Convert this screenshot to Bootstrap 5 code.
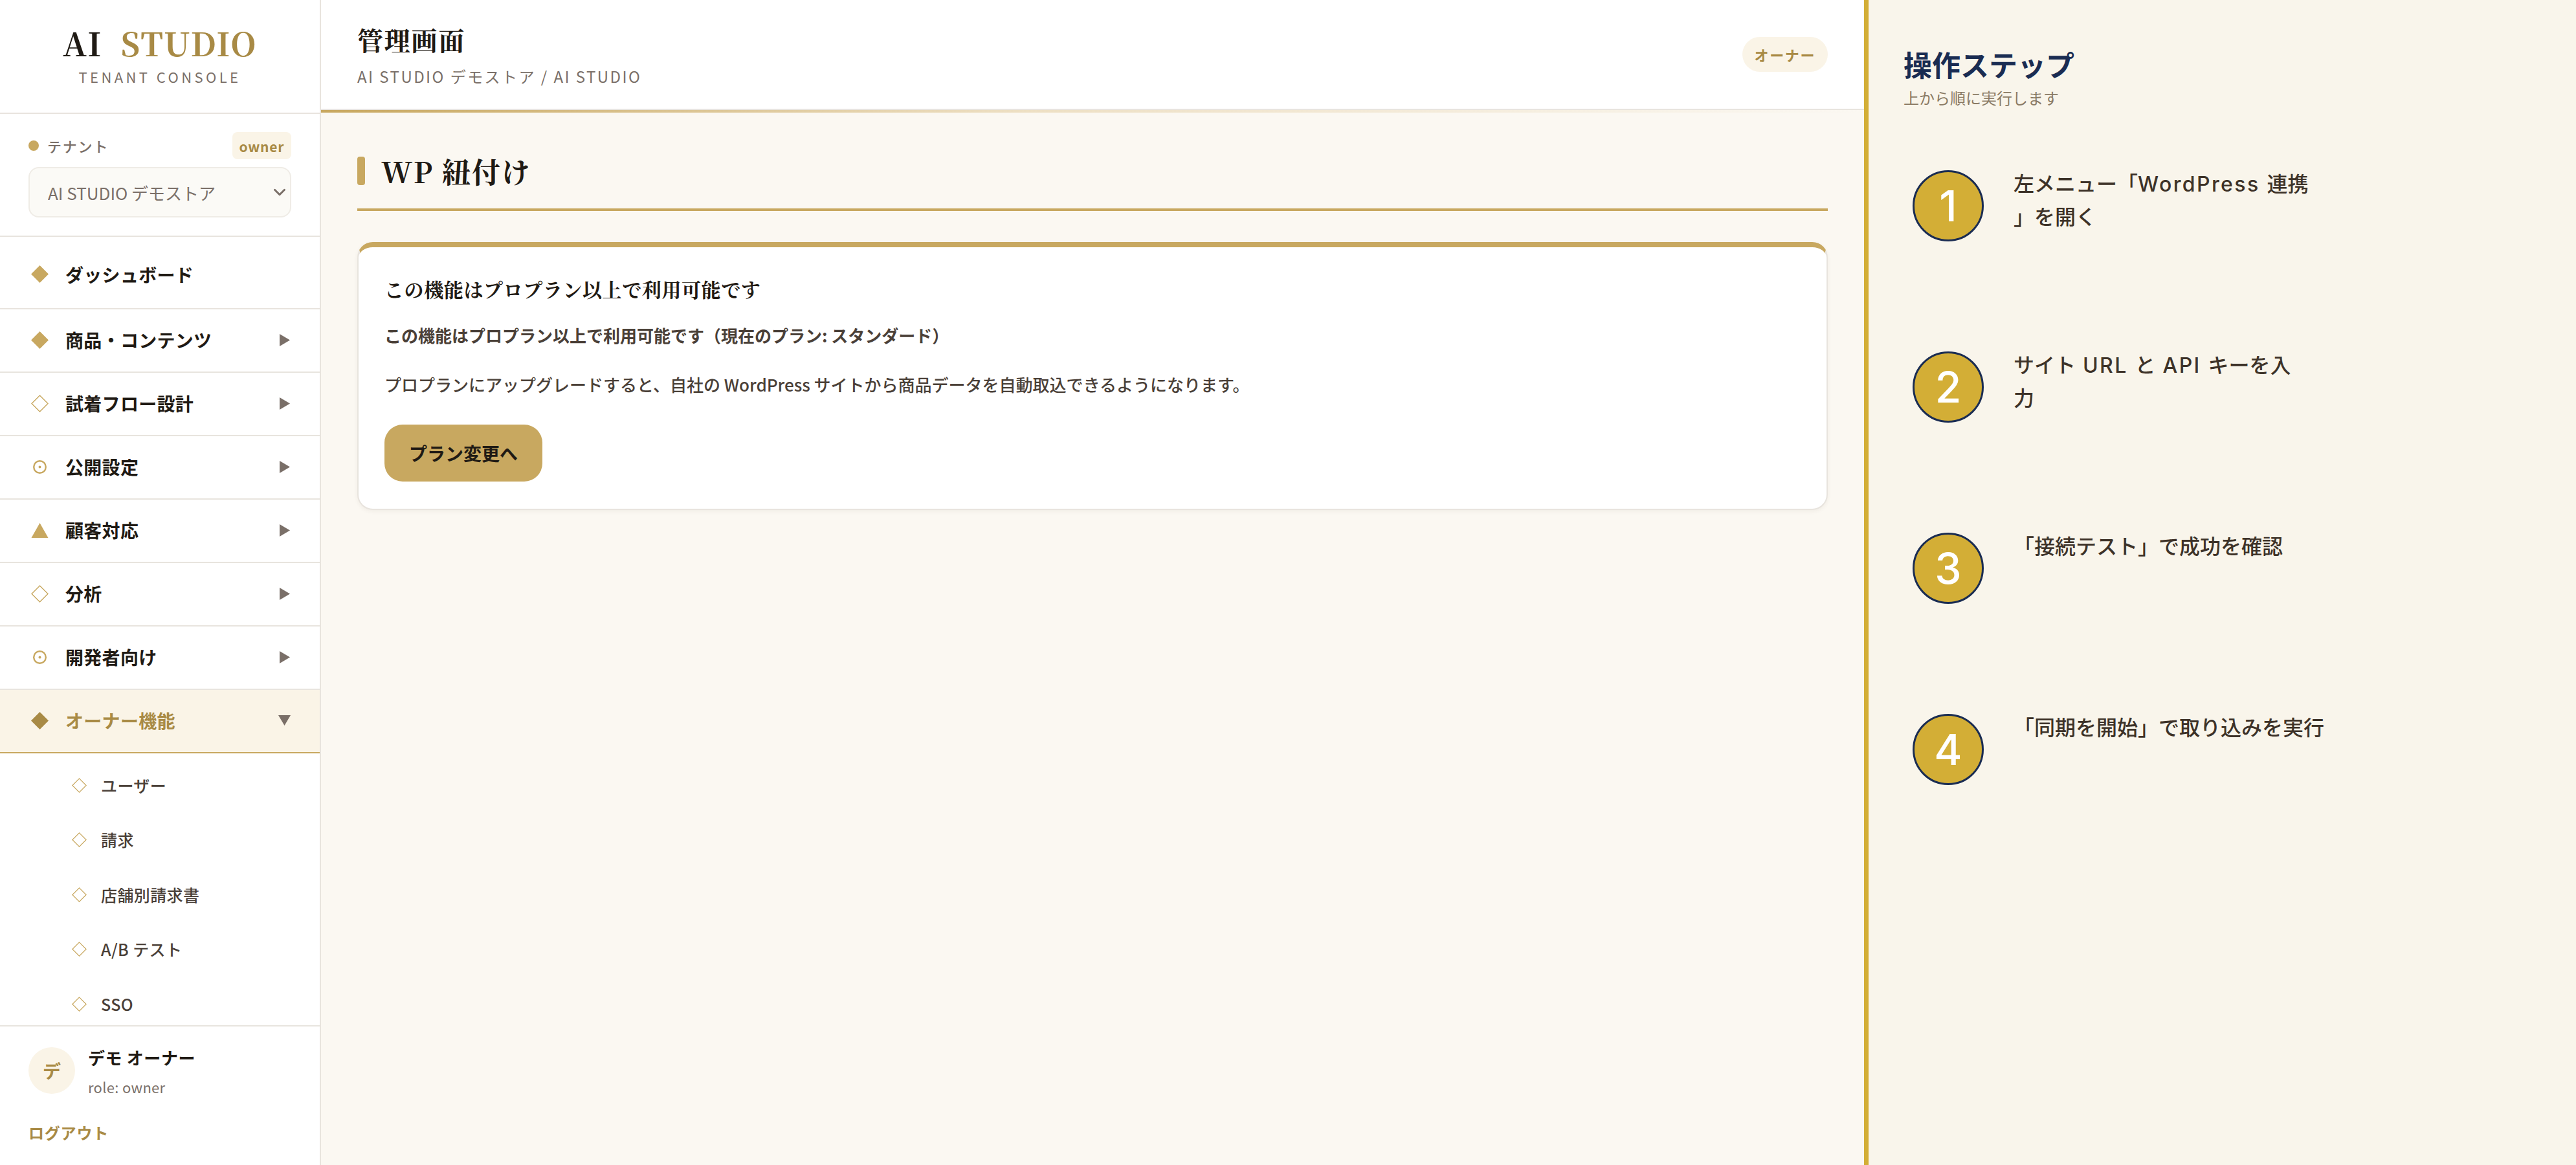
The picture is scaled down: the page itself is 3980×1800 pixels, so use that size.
<!DOCTYPE html>
<html lang="ja">
<head>
<meta charset="utf-8">
<title>管理画面</title>
<link href="https://cdn.jsdelivr.net/npm/bootstrap@5.3.0/dist/css/bootstrap.min.css" rel="stylesheet">
<style>
:root{--gold:#c8a860;--gold-dk:#a88a45;--cream:#faf4e7;--ink:#1f1a14;--mut:#7a6f68;--line:#e8e4de;--serif:"Noto Serif CJK JP","Liberation Serif","Noto Sans CJK JP",serif;--sans:"Noto Sans CJK JP","Noto Sans",sans-serif}
html,body{height:100%}
body{font-family:var(--sans);background:#fbf8f2;color:var(--ink);overflow:hidden;width:3980px;height:1800px}
.sb{width:496px;height:1800px;background:#fff;border-right:2px solid var(--line);flex:none}
.sb-brand{height:176px;border-bottom:2px solid var(--line);text-align:center;padding-top:32px}
.brand-big{font-family:var(--serif);font-weight:700;font-size:50px;line-height:66px;letter-spacing:1.6px;white-space:pre}
.brand-big span{color:var(--gold-dk)}
.brand-sub{font-size:22px;line-height:30px;letter-spacing:4.4px;color:var(--mut);margin-top:5px}
.sb-tenant{height:190px;border-bottom:2px solid var(--line);padding:28px 44px 0}
.tn-dot{width:16px;height:16px;border-radius:50%;background:var(--gold);margin-right:13px}
.tn-lbl{font-size:22px;font-weight:500;letter-spacing:1.8px;color:var(--mut);line-height:38px}
.tn-owner{background:var(--cream);color:var(--gold-dk);font-size:21px;font-weight:700;letter-spacing:.7px;border-radius:8px;padding:0 11px;height:42px;line-height:44px}
.tn-sel{margin-top:12px;height:78px;border:2px solid #efece6;border-radius:16px;background-color:#fbfaf6;font-size:26px;color:var(--mut);padding:0 40px 0 28px;
 background-image:url("data:image/svg+xml,%3csvg xmlns='http://www.w3.org/2000/svg' viewBox='0 0 16 16'%3e%3cpath fill='none' stroke='%237a6f68' stroke-linecap='round' stroke-linejoin='round' stroke-width='2.4' d='m2 5 6 6 6-6'/%3e%3c/svg%3e");background-size:20px 20px;background-position:right 6px center}
.sb-nav{flex:1 1 0;min-height:0;overflow:hidden;padding-top:9px}
.nv{height:98px;border-bottom:2px solid var(--line);display:flex;align-items:center;padding:0 46px 2px 48px;font-size:28px;font-weight:700;letter-spacing:.3px;color:var(--ink);text-decoration:none}
.nv-first{height:103px;padding-bottom:4px}
.nv-ico{width:27px;height:27px;flex:none;margin-right:26px;display:block}
.nv-txt{flex:1 1 auto}
.nv-arr{width:16px;height:19px;flex:none;display:block}
.nv-on{background:var(--cream);color:var(--gold-dk);border-bottom-color:var(--gold)}
.nv-on .nv-arr{width:19px;height:16px;margin-right:-1px}
.sub-list{padding-top:7px}
.sb-sub{height:84.5px;display:flex;align-items:center;padding-left:111px;font-size:25px;font-weight:500;letter-spacing:.4px;color:#4a4038;text-decoration:none}
.sb-sub svg{width:23px;height:23px;margin-right:22px;flex:none}
.sb-foot{height:216px;border-top:2px solid var(--line);padding:32px 44px 0;flex:none}
.av{width:72px;height:72px;border-radius:50%;background:var(--cream);color:var(--gold-dk);font-weight:700;font-size:28px;margin-right:20px;flex:none}
.who-n{font-size:26px;font-weight:700;line-height:36px;margin-top:-2px;letter-spacing:.6px}
.who-r{font-size:22px;line-height:30px;color:var(--mut);margin-top:12px;letter-spacing:.3px}
.logout{display:block;margin-top:38px;font-size:24px;font-weight:700;line-height:36px;color:var(--gold-dk);text-decoration:none;letter-spacing:.8px}
.mn{width:2384px;flex:none;height:1800px}
.mn-head{height:170px;background:#fff;border-bottom:2px solid var(--line);padding:0 56px;position:relative}
.mn-head::after{content:"";position:absolute;left:0;right:0;bottom:-6px;height:4px;background:linear-gradient(90deg,#c8a860 0,#eddfc3 45%,rgba(237,223,195,0) 100%)}
.mn-title{font-family:var(--serif);font-size:40px;font-weight:700;line-height:52px;margin:0 0 15px;letter-spacing:1.8px}
.mn-crumb{font-size:24px;line-height:32px;letter-spacing:2.45px;color:var(--mut)}
.pill-own{background:var(--cream);color:var(--gold-dk);font-size:22px;font-weight:700;letter-spacing:1.6px;padding:0 19px;height:54px;line-height:54px;border-radius:27px}
.mn-body{padding:0 56px}
.pg-title{font-family:var(--serif);font-size:44px;font-weight:700;line-height:60px;letter-spacing:1.76px;margin:64px 0 0;padding-bottom:28px;border-bottom:4px solid var(--gold);display:flex;align-items:center}
.pg-bar{width:12px;height:44px;background:var(--gold);border-radius:4px;margin-right:25px;flex:none}
.lock-card{margin-top:48px;border:2px solid var(--line);border-top:8px solid var(--gold);border-radius:24px;background:#fff;padding:42px 40px 38px;height:414px;box-shadow:0 2px 6px rgba(60,50,30,.06)}
.lock-h{font-family:var(--serif);font-size:30px;font-weight:700;line-height:44px;letter-spacing:.6px;margin:0}
.lock-p1{font-size:26px;font-weight:700;line-height:38px;color:#4a4038;margin:31px 0 0}
.lock-p2{font-size:26px;font-weight:500;line-height:38px;color:#4a4038;margin:38px 0 0}
.lock-btn{margin-top:43px;height:88px;width:244px;padding:0;background:var(--gold);border:0;border-radius:28px;color:var(--ink);font-size:28px;font-weight:700}
.st{width:1100px;flex:none;height:1800px;background:#f9f5eb;border-left:7px solid #d3ae36;padding:0 0 0 54px}
.st-h{font-size:44px;font-weight:700;line-height:60px;color:#1a2c52;margin:69px 0 0}
.st-s{font-size:24px;line-height:34px;color:#8a7a64;margin:5px 0 0}
.st-list{margin-top:91px;padding-left:14px}
.stp{height:280px;display:flex;align-items:flex-start}
.stp-n{width:110px;height:110px;border-radius:50%;background:#d3ae36;border:3px solid #1a2c52;color:#fff;font-family:Inter,var(--sans);font-size:66px;font-weight:500;line-height:1;margin:4px 46px 0 0;flex:none}
.stp-t{font-family:Inter,var(--sans);font-size:32px;font-weight:500;line-height:51px;color:#3d3228;white-space:nowrap}
.stp-lat{letter-spacing:2.4px}
</style>
</head>
<body>
<svg width="0" height="0" class="position-absolute">
<symbol id="i-fd" viewBox="0 0 27 27"><path d="M13.5 0 27 13.5 13.5 27 0 13.5Z" fill="currentColor"/></symbol>
<symbol id="i-hd" viewBox="0 0 27 27"><path d="M13.5 1 26 13.5 13.5 26 1 13.5Z" fill="none" stroke="currentColor" stroke-width="1.4"/></symbol>
<symbol id="i-ci" viewBox="0 0 27 27"><circle cx="13.5" cy="13.5" r="9.3" fill="none" stroke="currentColor" stroke-width="2.4"/><circle cx="13.5" cy="13.5" r="2" fill="currentColor"/></symbol>
<symbol id="i-tr" viewBox="0 0 27 27"><path d="M13.5 2 26.5 25H.5Z" fill="currentColor"/></symbol>
</svg>
<div class="d-flex">
<aside class="sb d-flex flex-column">
  <div class="sb-brand">
    <div class="brand-big">AI  <span>STUDIO</span></div>
    <div class="brand-sub">TENANT CONSOLE</div>
  </div>
  <div class="sb-tenant">
    <div class="d-flex align-items-center">
      <span class="tn-dot"></span><span class="tn-lbl flex-grow-1">テナント</span><span class="tn-owner">owner</span>
    </div>
    <select class="form-select tn-sel"><option>AI STUDIO デモストア</option></select>
  </div>
  <nav class="sb-nav">
    <a class="nv nv-first" href="#"><svg class="nv-ico" style="color:#c8a860"><use href="#i-fd"/></svg><span class="nv-txt">ダッシュボード</span></a>
    <a class="nv" href="#"><svg class="nv-ico" style="color:#c8a860"><use href="#i-fd"/></svg><span class="nv-txt">商品・コンテンツ</span><svg class="nv-arr" viewBox="0 0 16 19"><path d="M0 0 16 9.5 0 19Z" fill="#7a6f68"/></svg></a>
    <a class="nv" href="#"><svg class="nv-ico" style="color:#c8a860"><use href="#i-hd"/></svg><span class="nv-txt">試着フロー設計</span><svg class="nv-arr" viewBox="0 0 16 19"><path d="M0 0 16 9.5 0 19Z" fill="#7a6f68"/></svg></a>
    <a class="nv" href="#"><svg class="nv-ico" style="color:#c8a860"><use href="#i-ci"/></svg><span class="nv-txt">公開設定</span><svg class="nv-arr" viewBox="0 0 16 19"><path d="M0 0 16 9.5 0 19Z" fill="#7a6f68"/></svg></a>
    <a class="nv" href="#"><svg class="nv-ico" style="color:#c8a860"><use href="#i-tr"/></svg><span class="nv-txt">顧客対応</span><svg class="nv-arr" viewBox="0 0 16 19"><path d="M0 0 16 9.5 0 19Z" fill="#7a6f68"/></svg></a>
    <a class="nv" href="#"><svg class="nv-ico" style="color:#c8a860"><use href="#i-hd"/></svg><span class="nv-txt">分析</span><svg class="nv-arr" viewBox="0 0 16 19"><path d="M0 0 16 9.5 0 19Z" fill="#7a6f68"/></svg></a>
    <a class="nv" href="#"><svg class="nv-ico" style="color:#c8a860"><use href="#i-ci"/></svg><span class="nv-txt">開発者向け</span><svg class="nv-arr" viewBox="0 0 16 19"><path d="M0 0 16 9.5 0 19Z" fill="#7a6f68"/></svg></a>
    <a class="nv nv-on" href="#"><svg class="nv-ico" style="color:#a88a45"><use href="#i-fd"/></svg><span class="nv-txt">オーナー機能</span><svg class="nv-arr" viewBox="0 0 19 16"><path d="M0 0H19L9.5 16Z" fill="#7a6f68"/></svg></a>
    <div class="sub-list">
      <a class="sb-sub" href="#"><svg style="color:#c8a860"><use href="#i-hd"/></svg>ユーザー</a>
      <a class="sb-sub" href="#"><svg style="color:#c8a860"><use href="#i-hd"/></svg>請求</a>
      <a class="sb-sub" href="#"><svg style="color:#c8a860"><use href="#i-hd"/></svg>店舗別請求書</a>
      <a class="sb-sub" href="#"><svg style="color:#c8a860"><use href="#i-hd"/></svg>A/B テスト</a>
      <a class="sb-sub" href="#"><svg style="color:#c8a860"><use href="#i-hd"/></svg>SSO</a>
    </div>
  </nav>
  <div class="sb-foot">
    <div class="d-flex">
      <div class="av d-flex align-items-center justify-content-center">デ</div>
      <div><div class="who-n">デモ オーナー</div><div class="who-r">role: owner</div></div>
    </div>
    <a class="logout" href="#">ログアウト</a>
  </div>
</aside>
<main class="mn d-flex flex-column">
  <header class="mn-head d-flex align-items-center justify-content-between">
    <div><h1 class="mn-title">管理画面</h1><div class="mn-crumb">AI STUDIO デモストア / AI STUDIO</div></div>
    <span class="pill-own">オーナー</span>
  </header>
  <div class="mn-body">
    <h2 class="pg-title"><span class="pg-bar"></span>WP 紐付け</h2>
    <div class="card lock-card">
      <h3 class="lock-h">この機能はプロプラン以上で利用可能です</h3>
      <p class="lock-p1">この機能はプロプラン以上で利用可能です（現在のプラン: スタンダード）</p>
      <p class="lock-p2">プロプランにアップグレードすると、自社の WordPress サイトから商品データを自動取込できるようになります。</p>
      <div><button type="button" class="btn lock-btn">プラン変更へ</button></div>
    </div>
  </div>
</main>
<aside class="st">
  <h2 class="st-h">操作ステップ</h2>
  <p class="st-s">上から順に実行します</p>
  <div class="st-list">
    <div class="stp"><div class="stp-n d-flex align-items-center justify-content-center">1</div><div class="stp-t">左メニュー「<span class="stp-lat">WordPress </span>連携<br>」を開く</div></div>
    <div class="stp"><div class="stp-n d-flex align-items-center justify-content-center">2</div><div class="stp-t">サイト<span class="stp-lat"> URL </span>と<span class="stp-lat"> API </span>キーを入<br>力</div></div>
    <div class="stp"><div class="stp-n d-flex align-items-center justify-content-center">3</div><div class="stp-t">「接続テスト」で成功を確認</div></div>
    <div class="stp"><div class="stp-n d-flex align-items-center justify-content-center">4</div><div class="stp-t">「同期を開始」で取り込みを実行</div></div>
  </div>
</aside>
</div>
</body>
</html>
